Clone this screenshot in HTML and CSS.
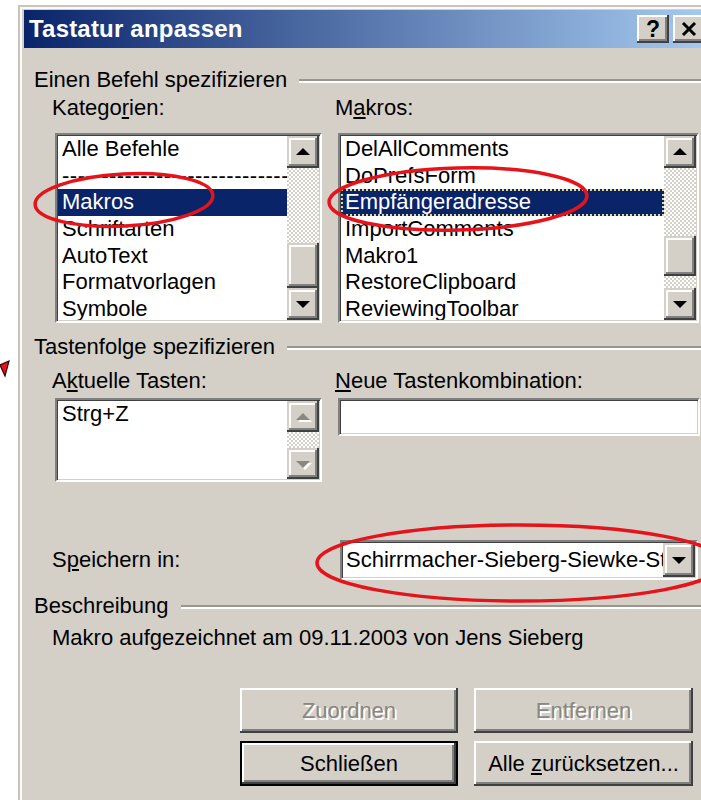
FILE: index.html
```html
<!DOCTYPE html>
<html lang="de">
<head>
<meta charset="utf-8">
<title>Tastatur anpassen</title>
<link rel="stylesheet" href="styles.css">
</head>
<body>
<div class="window">
  <div class="titlebar">
    <span class="title">Tastatur anpassen</span>
    <div class="caption-buttons">
      <span class="cap-btn cap-help">?</span>
      <span class="cap-btn cap-close"><svg width="16" height="14" viewBox="0 0 16 14"><path d="M2 1 L14 13 M14 1 L2 13" stroke="#000" stroke-width="3"/></svg></span>
    </div>
  </div>

  <div class="content">
    <div class="group-title"><span>Einen Befehl spezifizieren</span><i class="etch"></i></div>
    <div class="cols cols-cmd">
      <div class="label">Katego<u>r</u>ien:</div>
      <div class="label">M<u>a</u>kros:</div>

      <div class="listbox sunken list-tall">
        <ul class="items">
          <li>Alle Befehle</li>
          <li class="sep">--------------------------------------------------------</li>
          <li class="sel">Makros</li>
          <li>Schriftarten</li>
          <li>AutoText</li>
          <li>Formatvorlagen</li>
          <li>Symbole</li>
        </ul>
        <div class="vscroll">
          <span class="sb-btn"><i class="arrow arrow-up"></i></span>
          <span class="sb-track"><span class="sb-thumb thumb-cat"></span></span>
          <span class="sb-btn"><i class="arrow arrow-down"></i></span>
        </div>
      </div>

      <div class="listbox sunken list-tall list-wide">
        <ul class="items">
          <li>DelAllComments</li>
          <li>DoPrefsForm</li>
          <li class="sel focus">Empfängeradresse</li>
          <li>ImportComments</li>
          <li>Makro1</li>
          <li>RestoreClipboard</li>
          <li>ReviewingToolbar</li>
        </ul>
        <div class="vscroll">
          <span class="sb-btn"><i class="arrow arrow-up"></i></span>
          <span class="sb-track"><span class="sb-thumb thumb-mac"></span></span>
          <span class="sb-btn"><i class="arrow arrow-down"></i></span>
        </div>
      </div>
    </div>

    <div class="group-title group-keys"><span>Tastenfolge spezifizieren</span><i class="etch"></i></div>
    <div class="cols cols-keys">
      <div class="label">A<u>k</u>tuelle Tasten:</div>
      <div class="label"><u>N</u>eue Tastenkombination:</div>

      <div class="listbox sunken list-short">
        <ul class="items">
          <li>Strg+Z</li>
        </ul>
        <div class="vscroll vscroll-off">
          <span class="sb-btn sb-btn-short"><i class="arrow arrow-up"></i></span>
          <span class="sb-track"></span>
          <span class="sb-btn sb-btn-short"><i class="arrow arrow-down"></i></span>
        </div>
      </div>

      <div class="textbox sunken"></div>
    </div>

    <div class="cols save-row">
      <div class="label">S<u>p</u>eichern in:</div>
      <div class="combo sunken">
        <span class="combo-text">Schirrmacher-Sieberg-Siewke-Straße</span>
        <span class="sb-btn combo-btn"><i class="arrow arrow-down"></i></span>
      </div>
    </div>

    <div class="group-title group-desc"><span>Beschreibung</span><i class="etch"></i></div>
    <p class="desc">Makro aufgezeichnet am 09.11.2003 von Jens Sieberg</p>

    <div class="buttons">
      <span class="btn disabled"><span>Zuordnen</span></span>
      <span class="btn disabled"><span>Entfernen</span></span>
      <span class="btn default"><span>Schließen</span></span>
      <span class="btn"><span>Alle <u>z</u>urücksetzen...</span></span>
    </div>
  </div>
</div>

<svg class="marks" width="701" height="800" viewBox="0 0 701 800">
  <g fill="none" stroke="#e5141b" stroke-width="3.5">
    <ellipse cx="124" cy="200" rx="89" ry="26" transform="rotate(-3 124 200)"/>
    <ellipse cx="458" cy="199" rx="129" ry="31" transform="rotate(-1.5 458 199)"/>
    <ellipse cx="520" cy="563" rx="203" ry="38"/>
  </g>
  <path d="M0 365 L9 361 L5 376 Z" fill="#e5141b" stroke="#300" stroke-width="1.2"/>
</svg>
</body>
</html>
```

FILE: styles.css
```css
* {
  box-sizing: border-box;
}

body {
  margin: 0;
  width: 701px;
  height: 800px;
  overflow: hidden;
  position: relative;
  background: #fff;
  font-family: "Liberation Sans", Arial, sans-serif;
  font-size: 22px;
  color: #000;
}

u {
  text-decoration-thickness: 2px;
  text-underline-offset: 2px;
}

/* dialog frame */
.window {
  margin: 5px 0 0 18px;
  width: 697px;
  height: 830px;
  background: #d4d0c8;
  border: 2px solid #c9c5bd;
  padding: 3px 4px 0 4px;
  box-shadow: inset 2px 2px #fbfaf8;
}

.titlebar {
  height: 38px;
  display: flex;
  align-items: center;
  padding: 0 4px 0 5px;
  background: linear-gradient(to right, #0a246a, #a6caf0);
}

.title {
  color: #fff;
  font-weight: bold;
  font-size: 24px;
  letter-spacing: 0.2px;
}

.caption-buttons {
  margin-left: auto;
  display: flex;
  gap: 4px;
}

.cap-btn {
  width: 32px;
  height: 28px;
  display: flex;
  align-items: center;
  justify-content: center;
  background: #d4d0c8;
  box-shadow: inset -2px -2px #404040, inset 2px 2px #fff, inset -4px -4px #808080;
}

.cap-help {
  font-weight: bold;
  font-size: 23px;
  padding-top: 1px;
}

/* dialog body */
.content {
  padding: 19px 0 0 10px;
}

.group-title {
  display: flex;
  align-items: center;
  line-height: 26px;
  height: 26px;
}

.etch {
  flex: 1;
  margin: 1px 0 0 12px;
  height: 4px;
  border-top: 2px solid #9a968e;
  border-bottom: 2px solid #fff;
}

.group-keys {
  margin-top: 11px;
}

.group-desc {
  margin-top: 13px;
}

.cols {
  display: grid;
  grid-template-columns: 267px 362px;
  column-gap: 16px;
  margin-left: 21px;
}

.label {
  line-height: 26px;
  margin-left: -3px;
}

.cols-cmd {
  margin-top: 2px;
  row-gap: 12px;
}

.cols-keys {
  margin-top: 8px;
  row-gap: 4px;
  align-items: start;
}

/* sunken client edge */
.sunken {
  background: #fff;
  border: 2px solid;
  border-color: #808080 #fff #fff #808080;
  padding: 1px;
  box-shadow: inset 1px 1px #404040, inset -1px -1px #d4d0c8;
}

.listbox {
  display: flex;
}

.list-tall {
  height: 190px;
}

.list-wide {
  width: 361px;
}

.list-short {
  height: 84px;
}

.items {
  flex: 1;
  min-width: 0;
  margin: 0;
  padding: 0;
  list-style: none;
  overflow: hidden;
}

.items li {
  height: 26.67px;
  line-height: 26.67px;
  padding-left: 4px;
  white-space: nowrap;
  overflow: hidden;
}

.items li.sep {
  letter-spacing: 0.5px;
}

.items li.sel {
  background: #0a246a;
  color: #fff;
}

.items li.focus {
  outline: 2px dotted #e9d98f;
  outline-offset: -2px;
}

/* scrollbar */
.vscroll {
  width: 32px;
  display: flex;
  flex-direction: column;
}

.sb-btn {
  width: 32px;
  height: 32px;
  flex: none;
  display: flex;
  align-items: center;
  justify-content: center;
  background: #d4d0c8;
  box-shadow: inset -2px -2px #404040, inset 2px 2px #d4d0c8, inset -4px -4px #808080, inset 4px 4px #fff;
}

.sb-btn-short {
  height: 31px;
}

.sb-track {
  flex: 1;
  display: flex;
  flex-direction: column;
  background: repeating-conic-gradient(#fff 0 25%, #d4d0c8 0 50%) 0 0 / 4px 4px;
}

.sb-thumb {
  width: 32px;
  background: #d4d0c8;
  box-shadow: inset -2px -2px #404040, inset 2px 2px #d4d0c8, inset -4px -4px #808080, inset 4px 4px #fff;
}

.thumb-cat {
  margin-top: 75px;
  height: 45px;
}

.thumb-mac {
  margin-top: 68px;
  height: 40px;
}

.arrow {
  width: 0;
  height: 0;
  border-left: 7px solid transparent;
  border-right: 7px solid transparent;
}

.arrow-up {
  border-bottom: 7px solid #000;
  margin-top: -1px;
}

.arrow-down {
  border-top: 7px solid #000;
  margin-top: 1px;
}

.vscroll-off .arrow-up {
  border-bottom-color: #8a8780;
  filter: drop-shadow(2px 2px 0 #fff);
}

.vscroll-off .arrow-down {
  border-top-color: #8a8780;
  filter: drop-shadow(2px 2px 0 #fff);
}

.textbox {
  height: 38px;
}

/* store-in row */
.save-row {
  margin-top: 58px;
  align-items: center;
}

.combo {
  margin-left: 2px;
  width: 358px;
  height: 40px;
  display: flex;
  align-items: stretch;
}

.combo-text {
  flex: 1;
  min-width: 0;
  overflow: hidden;
  white-space: nowrap;
  line-height: 34px;
  padding-left: 3px;
}

.combo-btn {
  height: auto;
}

.desc {
  margin: 6px 0 0 18px;
  line-height: 26px;
}

/* push buttons */
.buttons {
  margin: 37px 16px 0 0;
  display: grid;
  grid-template-columns: 218px 219px;
  grid-auto-rows: 45px;
  gap: 8px 16px;
  justify-content: end;
}

.btn {
  display: flex;
  align-items: center;
  justify-content: center;
  white-space: nowrap;
  background: #d4d0c8;
  box-shadow: inset -2px -2px #404040, inset 2px 2px #fff, inset -4px -4px #808080, inset 4px 4px #d4d0c8;
}

.btn.disabled {
  color: #8a8780;
  text-shadow: 2px 2px 0 #fff;
}

.btn.default {
  border: 2px solid #000;
}

/* hand-drawn markings */
.marks {
  position: absolute;
  left: 0;
  top: 0;
  pointer-events: none;
}
```
